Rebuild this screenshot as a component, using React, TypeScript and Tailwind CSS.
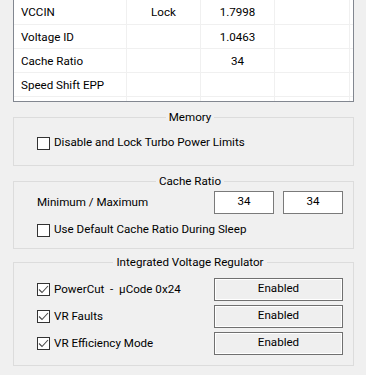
import React from "react";

const font = { fontFamily: 'Roboto, "Noto Sans", sans-serif' };

function Check({ checked }: { checked?: boolean }) {
  return (
    <span className="flex h-[13px] w-[13px] shrink-0 items-center justify-center border border-[#333333] bg-white">
      {checked && (
        <svg width="11" height="11" viewBox="0 0 11 11">
          <path d="M1 5.5 L4 8.5 L10 2" fill="none" stroke="#4a4a4a" strokeWidth="1.1" />
        </svg>
      )}
    </span>
  );
}

function Row({ label, c2, c3, first }: { label: string; c2?: string; c3?: string; first?: boolean }) {
  return (
    <div className={`flex border-b border-[#f0f0f0] ${first ? "h-[25px]" : "h-[24px]"}`}>
      <div className="flex w-[113px] items-center border-r border-[#f0f0f0] pl-[7px] pt-[2px]">{label}</div>
      <div className="flex w-[74px] items-center justify-center border-r border-[#f0f0f0] pt-[2px]">{c2}</div>
      <div className="flex w-[74px] items-center justify-center border-r border-[#f0f0f0] pt-[2px]">{c3}</div>
      <div className="w-[75px] border-r border-[#f0f0f0]" />
      <div className="flex-1" />
    </div>
  );
}

function Group({ title, children, className }: { title: string; children: React.ReactNode; className?: string }) {
  return (
    <fieldset className={`ml-[13px] w-[341px] border border-[#dcdcdc] pl-[23px] pr-[10px] ${className ?? ""}`}>
      <legend className="mx-auto px-[3px] leading-[16px]">{title}</legend>
      {children}
    </fieldset>
  );
}

export default function App() {
  return (
    <div className="h-[375px] w-[366px] overflow-hidden bg-[#f0f0f0] text-[11.6px] text-black" style={font}>
      <div className="ml-[13px] w-[341px] border-x border-b border-[#828790] bg-white">
        <Row label="VCCIN" c2="Lock" c3="1.7998" first />
        <Row label="Voltage ID" c3="1.0463" />
        <Row label="Cache Ratio" c3="34" />
        <Row label="Speed Shift EPP" />
        <div className="flex h-[4px]">
          <div className="w-[113px] border-r border-[#f0f0f0]" />
          <div className="w-[74px] border-r border-[#f0f0f0]" />
          <div className="w-[74px] border-r border-[#f0f0f0]" />
          <div className="w-[75px] border-r border-[#f0f0f0]" />
        </div>
      </div>

      <Group title="Memory" className="mt-[7px] pt-[10px] pb-[14px]">
        <div className="flex h-[16px] items-center gap-[4px]">
          <Check />
          <span>Disable and Lock Turbo Power Limits</span>
        </div>
      </Group>

      <Group title="Cache Ratio" className="mt-[7px] pt-[2px] pb-[10px]">
        <div className="flex h-[23px] items-center">
          <span>Minimum / Maximum</span>
          <div className="ml-auto flex h-[23px] w-[60px] items-center justify-center border border-[#7a7a7a] bg-white pb-[2px]">34</div>
          <div className="ml-[9px] flex h-[23px] w-[60px] items-center justify-center border border-[#7a7a7a] bg-white pb-[2px]">34</div>
        </div>
        <div className="mt-[8px] flex h-[16px] items-center gap-[4px]">
          <Check />
          <span>Use Default Cache Ratio During Sleep</span>
        </div>
      </Group>

      <Group title="Integrated Voltage Regulator" className="mt-[5px] pt-[8px] pb-[10px]">
        <div className="flex flex-col gap-[4px]">
          {[
            "PowerCut  -  µCode 0x24",
            "VR Faults",
            "VR Efficiency Mode",
          ].map((t) => (
            <div key={t} className="flex h-[23px] items-center">
              <Check checked />
              <span className="ml-[4px] whitespace-pre">{t}</span>
              <div className="ml-auto flex h-[23px] w-[129px] items-center justify-center border border-[#707070] bg-[#efefef] pb-[2px] shadow-[inset_0_0_0_1px_#ffffff]">
                Enabled
              </div>
            </div>
          ))}
        </div>
      </Group>
    </div>
  );
}
